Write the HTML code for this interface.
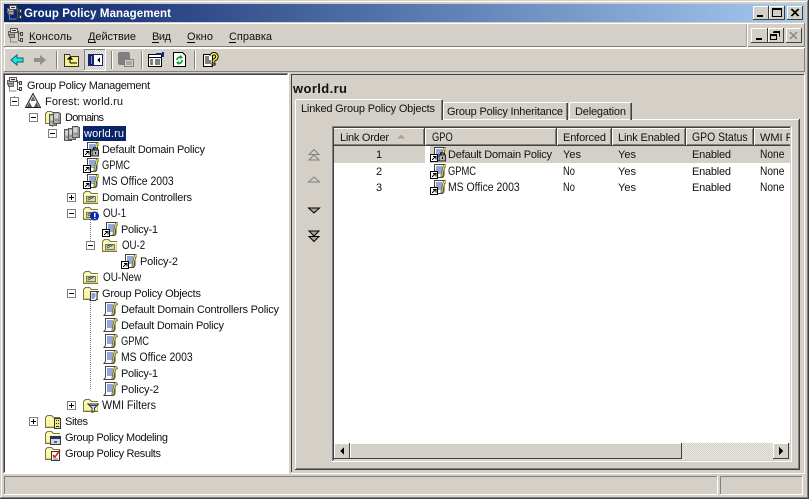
<!DOCTYPE html>
<html><head><meta charset="utf-8"><style>
html,body{margin:0;padding:0;background:#d4d0c8;width:809px;height:499px;overflow:hidden}
svg{display:block}
text{font-family:"Liberation Sans",sans-serif;font-size:11px;fill:#111}
text.c{font-size:12px}
</style></head><body>
<svg width="809" height="499" viewBox="0 0 809 499" xmlns="http://www.w3.org/2000/svg" shape-rendering="crispEdges">
<defs>
<linearGradient id="tg" x1="0" x2="1" y1="0" y2="0"><stop offset="0" stop-color="#0a246a"/><stop offset="1" stop-color="#a6caf0"/></linearGradient>
<pattern id="dith" width="2" height="2" patternUnits="userSpaceOnUse"><rect width="2" height="2" fill="#eae8e3"/><rect width="1" height="1" fill="#d4d0c8"/><rect x="1" y="1" width="1" height="1" fill="#d4d0c8"/></pattern>
<pattern id="dots" width="2" height="2" patternUnits="userSpaceOnUse"><rect width="1" height="1" fill="#808080"/></pattern>
<symbol id="plus" viewBox="0 0 9 9" width="9" height="9"><rect x=".5" y=".5" width="8" height="8" fill="#fff" stroke="#808080"/><path d="M2 4.500h5M4.500 2v5" stroke="#000" fill="none"/></symbol>
<symbol id="minus" viewBox="0 0 9 9" width="9" height="9"><rect x=".5" y=".5" width="8" height="8" fill="#fff" stroke="#808080"/><path d="M2 4.500h5" stroke="#000" fill="none"/></symbol>
<symbol id="gpm" viewBox="0 0 16 16" width="16" height="16"><path d="M1.500 3.500h6v4h-6z" fill="#b8b8b8" stroke="#666"/><path d="M3.500 .5h7v4h-7z" fill="#e4e4e4" stroke="#555"/><path d="M5 2.500h4" stroke="#333"/><path d="M2.500 6.500h5v3h-5z" fill="#a0a0a0" stroke="#666"/><path d="M11.500 3v10M11.500 5.500h2M11.500 12.500h2" stroke="#555" fill="none"/><path d="M13.500 4.500h2v3h-2zM13.500 10.500h2v3h-2z" fill="#ddd" stroke="#444"/><path d="M3.500 10v4h7" stroke="#888" fill="none"/></symbol>
<symbol id="forest" viewBox="0 0 16 16" width="16" height="16"><path d="M8 .5L.5 14.500h15z" fill="#fff" stroke="#222" shape-rendering="auto"/><path d="M8 3L5.500 8h5z" fill="#666" shape-rendering="auto"/><path d="M4.500 9L2 14h5zM11.500 9L9 14h5z" fill="#555" shape-rendering="auto"/></symbol>
<symbol id="folder" viewBox="0 0 16 16" width="16" height="16"><path d="M.5 4.500l2-2h4l2 2h6v10H.5z" fill="#fbf6a6" stroke="#77774a"/><path d="M1 5h14v1H1z" fill="#fffde0"/><path d="M14 6h1v8h-1zM1 13h14v1H1z" fill="#d8c86c"/></symbol>
<symbol id="srv" viewBox="0 0 8 13" width="8" height="13"><path d="M.5 1.500h5l2 1v10h-7z" fill="#b4b4b4" stroke="#555"/><path d="M1.500 4h4M1.500 6h4" stroke="#f4f4f4"/><path d="M1.500 9h4" stroke="#777"/><path d="M6 3v9" stroke="#808080"/></symbol>
<symbol id="domains" viewBox="0 0 16 16" width="16" height="16"><path d="M.5 3.500l2-2h4l2 2h6v10H.5z" fill="#fbf6a6" stroke="#77774a"/><use href="#srv" x="4" y="3"/><use href="#srv" x="8" y="1"/></symbol>
<symbol id="world" viewBox="0 0 16 16" width="16" height="16"><use href="#srv" x="0" y="3"/><use href="#srv" x="4" y="2"/><use href="#srv" x="8" y="0"/></symbol>
<symbol id="scroll" viewBox="0 0 16 16" width="16" height="16"><path d="M3.500 1.500h9.500v10c0 2-1 3-2 3H1.500c1-.5 2-1.500 2-3z" fill="#fff" stroke="#444" shape-rendering="auto"/><path d="M5 4h6M5 6h6M5 8h6M5 10h5" stroke="#2a4fb0"/><path d="M12.500 1.500c2 0 3 1 3 2l-2 1c0 3-2 5-1.500 9l-2 1c-.5-3 1.500-6 1.500-9z" fill="#f8ee30" stroke="#444" stroke-width=".7" shape-rendering="auto"/></symbol>
<symbol id="link" viewBox="0 0 16 16" width="16" height="16"><use href="#scroll" x="1" y="0"/><rect x=".5" y="8.500" width="7" height="7" fill="#fff" stroke="#000"/><path d="M2 14l3-3M3 10.500h3v3" stroke="#000" fill="none"/></symbol>
<symbol id="linklock" viewBox="0 0 16 16" width="16" height="16"><use href="#link"/><rect x="9" y="9" width="6.500" height="6" fill="#b0b0b0" stroke="#222"/><path d="M10.500 9V7h4v2" stroke="#222" fill="none"/><rect x="12" y="11" width="1" height="2" fill="#000"/></symbol>
<symbol id="ou" viewBox="0 0 16 16" width="16" height="16"><use href="#folder"/><path d="M3.500 7.500h9v5h-9z" fill="#d8d8a8" stroke="#777"/><path d="M5 11l3-1.500 3-2" stroke="#2a6a2a" fill="none"/><path d="M4.500 9.500l4-2" stroke="#444"/></symbol>
<symbol id="ouinfo" viewBox="0 0 16 16" width="16" height="16"><use href="#ou"/><circle cx="11.500" cy="11" r="4.500" fill="#0a28b8" shape-rendering="auto"/><path d="M11 8h1.500v4H11zM11 13h1.500v1H11z" fill="#fff"/></symbol>
<symbol id="gpof" viewBox="0 0 16 16" width="16" height="16"><use href="#folder"/><path d="M7.500 6.500h8l-1.500 1v6c0 1-1 2-2 2H6.500c1 0 1-1 1-2z" fill="#fff" stroke="#333"/><path d="M8.500 9h4M8.500 11h4M8.500 13h3" stroke="#1a3fa8"/></symbol>
<symbol id="wmi" viewBox="0 0 16 16" width="16" height="16"><use href="#folder"/><path d="M5 7h10.500l-4 4v3l-2.500 1.500V11z" fill="#e2e2e2" stroke="#333"/><path d="M7 8.500h6" stroke="#1a3fa8"/></symbol>
<symbol id="sites" viewBox="0 0 16 16" width="16" height="16"><use href="#folder"/><rect x="9.500" y="5.500" width="6" height="10" fill="#f2e97c" stroke="#333"/><path d="M11 7h1v1h-1zM13 7h1v1h-1zM11 10h1v1h-1zM13 10h1v1h-1zM11 13h3v1h-3z" fill="#222"/></symbol>
<symbol id="model" viewBox="0 0 16 16" width="16" height="16"><use href="#folder"/><rect x="5.500" y="7.500" width="10" height="8" fill="#d8d4e0" stroke="#333"/><rect x="6" y="8" width="9" height="2" fill="#1a2f9a"/><path d="M9 12h3v2H9z" fill="#666"/></symbol>
<symbol id="result" viewBox="0 0 16 16" width="16" height="16"><use href="#folder"/><rect x="6.500" y="6.500" width="8" height="9" fill="#fff" stroke="#333"/><path d="M8 12h3M8 14h5" stroke="#666"/><path d="M8 10l2 2 5-7" stroke="#d01818" stroke-width="1.500" fill="none" shape-rendering="auto"/></symbol>
</defs>

<!-- window frame -->
<rect width="809" height="499" fill="#d4d0c8"/>
<path d="M1 1.500h806M1.500 1v496" stroke="#fff"/>
<path d="M0 498.500h809M808.500 0v499" stroke="#404040"/>
<path d="M1 497.500h807M807.500 1v497" stroke="#808080"/>

<!-- title bar -->
<rect x="4" y="4" width="801" height="18" fill="url(#tg)"/>
<use href="#gpm" x="6" y="5"/>
<text x="24" y="17" style="font-weight:bold;font-size:11.500px;fill:#fff" textLength="147">Group Policy Management</text>
<rect x="753" y="6" width="16" height="14" fill="#d4d0c8"/><path d="M753.500 20V6.500H769" stroke="#fff" fill="none"/><path d="M753 19.500h15.500V6" stroke="#404040" fill="none"/><rect x="757" y="15" width="6" height="2" fill="#000"/>
<rect x="769" y="6" width="16" height="14" fill="#d4d0c8"/><path d="M769.500 20V6.500H785" stroke="#fff" fill="none"/><path d="M769 19.500h15.500V6" stroke="#404040" fill="none"/><path d="M772.500 8.500h9v8h-9z M772 9.500h10" stroke="#000" fill="none"/>
<rect x="787" y="6" width="16" height="14" fill="#d4d0c8"/><path d="M787.500 20V6.500H803" stroke="#fff" fill="none"/><path d="M787 19.500h15.500V6" stroke="#404040" fill="none"/><path d="M791 9l7 7M792 9l7 7M798 9l-7 7M799 9l-7 7" stroke="#000" shape-rendering="auto"/>

<!-- menu bar -->
<path d="M4 23.500h801M4.500 23v23" stroke="#fff"/><path d="M4 46.500h801M804.500 23v24" stroke="#808080"/>
<path d="M5 47.500h800" stroke="#fff"/>
<path d="M747.500 24v23" stroke="#fff"/><path d="M746.500 24v23" stroke="#a8a49c"/>
<use href="#gpm" x="7" y="28"/>
<text x="29" y="40" textLength="43">Консоль</text><rect x="29" y="42" width="7" height="1"/>
<text x="88" y="40" textLength="48">Действие</text><rect x="88" y="42" width="8" height="1"/>
<text x="152" y="40" textLength="19">Вид</text><rect x="152" y="42" width="7" height="1"/>
<text x="187" y="40" textLength="26">Окно</text><rect x="187" y="42" width="8" height="1"/>
<text x="229" y="40" textLength="43">Справка</text><rect x="229" y="42" width="7" height="1"/>
<rect x="751" y="28" width="17" height="15" fill="#d4d0c8"/><path d="M751.500 43V28.500H768" stroke="#fff" fill="none"/><path d="M751 42.500h16.500V28" stroke="#404040" fill="none"/><rect x="756" y="38" width="6" height="2" fill="#000"/>
<rect x="768" y="28" width="16" height="15" fill="#d4d0c8"/><path d="M768.500 43V28.500H784" stroke="#fff" fill="none"/><path d="M768 42.500h15.500V28" stroke="#404040" fill="none"/><path d="M773.500 31.500h6v5M773 32.500h7M770.500 34.500h6v5h-6zM770 35.500h7" stroke="#000" fill="none"/>
<rect x="786" y="28" width="16" height="15" fill="#d4d0c8"/><path d="M786.500 43V28.500H802" stroke="#fff" fill="none"/><path d="M786 42.500h15.500V28" stroke="#404040" fill="none"/><path d="M790 32l7 7M797 32l-7 7" stroke="#8a8a8a" stroke-width="1.500" shape-rendering="auto"/>

<!-- toolbar -->
<path d="M4 48.500h801M4.500 48v24" stroke="#fff"/><path d="M4 71.500h801M804.500 48v24" stroke="#808080"/>
<path d="M11 60l6-5v3h6v4h-6v3z" fill="#1fe6e6" stroke="#006a6a" shape-rendering="auto"/>
<path d="M46 60l-6-5v3h-6v4h6v3z" fill="#909090" shape-rendering="auto"/>
<path d="M56.500 51v18" stroke="#808080"/><path d="M57.500 51v18" stroke="#fff"/>
<path d="M64.500 54.500h5l1 2h8v10h-14z" fill="#f8f088" stroke="#333"/><path d="M70 63h7M70 63v-4" stroke="#000" fill="none"/><path d="M70 56l-3 3.500h6z" fill="#000"/>
<rect x="84" y="49" width="22" height="22" fill="url(#dith)"/><path d="M84.500 71V49.500H106" stroke="#808080" fill="none"/><path d="M84 70.500h21.500V49" stroke="#fff" fill="none"/>
<rect x="88.500" y="54.500" width="14" height="11" fill="#fff" stroke="#14246e"/><rect x="89" y="55" width="5" height="10" fill="#14246e"/><path d="M91 57h1M91 59h1M91 61h1M91 63h1" stroke="#fff"/><path d="M100 57v6l-3-3z" fill="#000"/><path d="M88 54.500h15" stroke="#14246e"/>
<path d="M111.500 51v18" stroke="#808080"/><path d="M112.500 51v18" stroke="#fff"/>
<rect x="118" y="52" width="12" height="13" rx="2" fill="#808080"/><rect x="124.500" y="59.500" width="9" height="7" fill="#d4d0c8" stroke="#808080"/><path d="M126 62h6M126 64h6" stroke="#808080"/>
<path d="M141.500 51v18" stroke="#808080"/><path d="M142.500 51v18" stroke="#fff"/>
<path d="M148.500 54.500h13v12h-13z" fill="#fff" stroke="#000"/><path d="M148 57.500h14" stroke="#000"/><path d="M150 60h3M155 60h5M150 62h3M155 62h5M150 64h3M155 64h5" stroke="#000"/><path d="M156 53h6v-1l2 0v5h-2v-2h-6z" fill="#10288a"/>
<path d="M173.500 52.500h9l3 3v11h-12z" fill="#fff" stroke="#000"/><path d="M177 60a3 3 0 0 1 4.500-2.500M182 60a3 3 0 0 1-4.500 3" fill="none" stroke="#0f9a2a" stroke-width="1.600" shape-rendering="auto"/><path d="M180 55l3 2.500-3 1.500zM179 65l-3-2.500 3-1.500z" fill="#0f9a2a" shape-rendering="auto"/>
<path d="M194.500 51v18" stroke="#808080"/><path d="M195.500 51v18" stroke="#fff"/>
<path d="M203.500 54.500h9v12h-9z" fill="#fff" stroke="#000"/><path d="M205 57h4M205 59h4M205 61h6M205 63h6" stroke="#000"/>
<path d="M211 56a3 3 0 1 1 4 3.500l-1.500 1v1.500" fill="none" stroke="#000" stroke-width="3.400" shape-rendering="auto"/><path d="M211 56a3 3 0 1 1 4 3.500l-1.500 1v1.500" fill="none" stroke="#f8ec20" stroke-width="1.600" shape-rendering="auto"/><rect x="212" y="63" width="3" height="2" fill="#f8ec20" stroke="#000" stroke-width=".6"/>

<!-- left pane -->
<path d="M4 74.500h283M4.500 74v398" stroke="#404040"/>
<path d="M3 73.500h285M3.500 73v400" stroke="#808080"/>
<path d="M3 473.500h285M288.500 73v401" stroke="#fff"/>
<rect x="5" y="75" width="283" height="398" fill="#fff"/>

<!-- tree dotted lines -->
<g fill="url(#dots)">
<rect x="14" y="95" width="1" height="6"/><rect x="19" y="101" width="7" height="1"/>
<rect x="33" y="107" width="1" height="346"/><rect x="38" y="117" width="6" height="1"/>
<rect x="52" y="122" width="1" height="6"/><rect x="57" y="133" width="6" height="1"/>
<rect x="38" y="421" width="6" height="1"/><rect x="33" y="437" width="12" height="1"/><rect x="33" y="453" width="12" height="1"/>
<rect x="71" y="139" width="1" height="154"/>
<rect x="71" y="149" width="12" height="1"/><rect x="71" y="165" width="12" height="1"/><rect x="71" y="181" width="12" height="1"/>
<rect x="76" y="197" width="6" height="1"/><rect x="76" y="213" width="6" height="1"/><rect x="71" y="277" width="12" height="1"/><rect x="76" y="293" width="6" height="1"/>
<rect x="90" y="219" width="1" height="26"/><rect x="90" y="229" width="12" height="1"/><rect x="95" y="245" width="6" height="1"/>
<rect x="109" y="251" width="1" height="10"/><rect x="109" y="261" width="12" height="1"/>
<rect x="90" y="299" width="1" height="90"/>
<rect x="90" y="309" width="12" height="1"/><rect x="90" y="325" width="12" height="1"/><rect x="90" y="341" width="12" height="1"/><rect x="90" y="357" width="12" height="1"/><rect x="90" y="373" width="12" height="1"/><rect x="90" y="389" width="12" height="1"/>
<rect x="76" y="405" width="6" height="1"/>
<rect x="71" y="293" width="1" height="112"/>
</g>
<use href="#minus" x="10" y="97"/><use href="#minus" x="29" y="113"/><use href="#minus" x="48" y="129"/>
<use href="#plus" x="67" y="193"/><use href="#minus" x="67" y="209"/><use href="#minus" x="86" y="241"/><use href="#minus" x="67" y="289"/><use href="#plus" x="67" y="401"/><use href="#plus" x="29" y="417"/>

<use href="#gpm" x="6" y="77"/>
<use href="#forest" x="25" y="93"/>
<use href="#domains" x="45" y="110"/>
<use href="#world" x="64" y="125"/>
<use href="#linklock" x="83" y="141"/>
<use href="#link" x="83" y="157"/>
<use href="#link" x="83" y="173"/>
<use href="#ou" x="83" y="189"/>
<use href="#ouinfo" x="83" y="205"/>
<use href="#link" x="102" y="221"/>
<use href="#ou" x="102" y="237"/>
<use href="#link" x="121" y="253"/>
<use href="#ou" x="83" y="269"/>
<use href="#gpof" x="83" y="285"/>
<use href="#scroll" x="102" y="301"/><use href="#scroll" x="102" y="317"/><use href="#scroll" x="102" y="333"/><use href="#scroll" x="102" y="349"/><use href="#scroll" x="102" y="365"/><use href="#scroll" x="102" y="381"/>
<use href="#wmi" x="83" y="397"/>
<use href="#sites" x="45" y="413"/>
<use href="#model" x="45" y="429"/>
<use href="#result" x="45" y="445"/>

<g>
<text x="27" y="89" textLength="123">Group Policy Management</text>
<text x="45" y="105" textLength="78">Forest: world.ru</text>
<text x="65" y="121" textLength="39">Domains</text>
<rect x="83" y="126" width="43" height="15" fill="#0a246a"/>
<text x="84" y="137" textLength="40" style="fill:#fff">world.ru</text>
<text x="102" y="153" textLength="103">Default Domain Policy</text>
<text class="c" transform="translate(102 169) scale(.78 1)">GPMC</text>
<text class="c" transform="translate(102 185) scale(.87 1)">MS Office 2003</text>
<text x="102" y="201" textLength="90">Domain Controllers</text>
<text class="c" transform="translate(103 217) scale(.81 1)">OU-1</text>
<text x="121" y="233" textLength="37">Policy-1</text>
<text class="c" transform="translate(122 249) scale(.81 1)">OU-2</text>
<text x="140" y="265" textLength="38">Policy-2</text>
<text class="c" transform="translate(103 281) scale(.83 1)">OU-New</text>
<text x="102" y="297" textLength="99">Group Policy Objects</text>
<text x="121" y="313" textLength="158">Default Domain Controllers Policy</text>
<text x="121" y="329" textLength="103">Default Domain Policy</text>
<text class="c" transform="translate(121 345) scale(.78 1)">GPMC</text>
<text class="c" transform="translate(121 361) scale(.87 1)">MS Office 2003</text>
<text x="121" y="377" textLength="37">Policy-1</text>
<text x="121" y="393" textLength="38">Policy-2</text>
<text class="c" transform="translate(102 409) scale(.89 1)">WMI Filters</text>
<text x="65" y="425" textLength="23">Sites</text>
<text x="65" y="441" textLength="103">Group Policy Modeling</text>
<text x="65" y="457" textLength="96">Group Policy Results</text>
</g>

<!-- right pane -->
<path d="M291 74.500h514M291.500 74v398" stroke="#404040"/>
<path d="M291 473.500h514M804.500 74v400" stroke="#fff"/>
<text x="293" y="93" style="font-weight:bold;font-size:13px" textLength="54">world.ru</text>

<!-- tab panel -->
<path d="M295.500 470V119.500H800" stroke="#fff" fill="none"/>
<path d="M295 469.500h504.500V119" stroke="#404040" fill="none"/>
<path d="M296 468.500h502.500V120" stroke="#808080" fill="none"/>

<!-- tabs -->
<path d="M443.500 120V103.500l1-1h123" stroke="#fff" fill="none"/><path d="M567.500 103v17" stroke="#404040"/><path d="M566.500 103v17" stroke="#808080"/>
<path d="M569.500 120V103.500l1-1h60" stroke="#fff" fill="none"/><path d="M631.500 103v17" stroke="#404040"/><path d="M630.500 103v17" stroke="#808080"/>
<rect x="296" y="100" width="146" height="21" fill="#d4d0c8"/>
<path d="M295.500 120V100.500l1-1h145" stroke="#fff" fill="none"/><path d="M442.500 100v20" stroke="#404040"/><path d="M441.500 100v20" stroke="#808080"/>
<text x="301" y="112" textLength="134">Linked Group Policy Objects</text>
<text x="447" y="115" textLength="116">Group Policy Inheritance</text>
<text x="575" y="115" textLength="51">Delegation</text>

<!-- order arrows -->
<g fill="#d4d0c8" stroke="#808080" shape-rendering="auto">
<path d="M314 149.500l5 5h-10zM314 155l5 5h-10z"/>
<path d="M314 177l5.500 5h-11z"/>
</g>
<g fill="#a8a49c" stroke="#000" shape-rendering="auto">
<path d="M314 213l-5.500-5h11z"/>
<path d="M314 236l-5-5h10zM314 241.500l-5-5h10z"/>
</g>

<!-- list view -->
<rect x="332" y="126" width="459" height="336" fill="#fff"/>
<path d="M332.500 461V126.500H791" stroke="#808080" fill="none"/>
<path d="M333.500 460V127.500H790" stroke="#404040" fill="none"/>
<path d="M332 461.500h459.500V126" stroke="#fff" fill="none"/>
<path d="M333 460.500h457.500V127" stroke="#d4d0c8" fill="none"/>

<!-- header -->
<rect x="334" y="128" width="456" height="18" fill="#d4d0c8"/>
<path d="M334 128.500h456" stroke="#fff"/>
<path d="M334 145.500h456" stroke="#404040"/><path d="M334 144.500h456" stroke="#808080"/>
<path d="M424.500 128v18" stroke="#404040"/><path d="M423.500 129v16" stroke="#808080"/><path d="M425.500 129v16" stroke="#fff"/>
<path d="M556.500 128v18" stroke="#404040"/><path d="M555.500 129v16" stroke="#808080"/><path d="M557.500 129v16" stroke="#fff"/>
<path d="M611.500 128v18" stroke="#404040"/><path d="M610.500 129v16" stroke="#808080"/><path d="M612.500 129v16" stroke="#fff"/>
<path d="M685.500 128v18" stroke="#404040"/><path d="M684.500 129v16" stroke="#808080"/><path d="M686.500 129v16" stroke="#fff"/>
<path d="M753.500 128v18" stroke="#404040"/><path d="M752.500 129v16" stroke="#808080"/><path d="M754.500 129v16" stroke="#fff"/>
<text x="340" y="141" textLength="49">Link Order</text>
<path d="M397 138.500l4-4 4 4z" fill="#a8a49c"/>
<text class="c" transform="translate(432 141) scale(.78 1)">GPO</text>
<text x="563" y="141" textLength="43">Enforced</text>
<text x="618" y="141" textLength="62">Link Enabled</text>
<text class="c" transform="translate(692 141) scale(.87 1)">GPO Status</text>
<clipPath id="cw"><rect x="755" y="128" width="35" height="80"/></clipPath>
<text x="760" y="141" clip-path="url(#cw)">WMI Filter</text>

<!-- rows -->
<rect x="334" y="146" width="456" height="17" fill="#d4d0c8"/>
<rect x="425" y="146" width="5" height="17" fill="#fff"/>
<use href="#linklock" x="430" y="146"/><use href="#link" x="430" y="163"/><use href="#link" x="430" y="179"/>
<text x="376" y="158">1</text><text x="448" y="158" textLength="104">Default Domain Policy</text><text x="563" y="158" textLength="18">Yes</text><text x="618" y="158" textLength="18">Yes</text><text x="692" y="158" textLength="39">Enabled</text><text class="c" transform="translate(760 158) scale(.85 1)">None</text>
<text x="376" y="175">2</text><text class="c" transform="translate(448 175) scale(.78 1)">GPMC</text><text class="c" transform="translate(563 175) scale(.78 1)">No</text><text x="618" y="175" textLength="18">Yes</text><text x="692" y="175" textLength="39">Enabled</text><text class="c" transform="translate(760 175) scale(.85 1)">None</text>
<text x="376" y="191">3</text><text class="c" transform="translate(448 191) scale(.87 1)">MS Office 2003</text><text class="c" transform="translate(563 191) scale(.78 1)">No</text><text x="618" y="191" textLength="18">Yes</text><text x="692" y="191" textLength="39">Enabled</text><text class="c" transform="translate(760 191) scale(.85 1)">None</text>

<!-- scrollbar -->
<rect x="334" y="443" width="456" height="17" fill="url(#dith)"/>
<rect x="334" y="443" width="16" height="16" fill="#d4d0c8"/><path d="M334.500 459V443.500H350" stroke="#fff" fill="none"/><path d="M334 458.500h15.500V443" stroke="#404040" fill="none"/><path d="M340 451l4-4v8z" fill="#000"/>
<rect x="350" y="443" width="332" height="16" fill="#d4d0c8"/><path d="M350.500 459V443.500H682" stroke="#fff" fill="none"/><path d="M350 458.500h331.500V443" stroke="#404040" fill="none"/>
<rect x="773" y="443" width="16" height="16" fill="#d4d0c8"/><path d="M773.500 459V443.500H789" stroke="#fff" fill="none"/><path d="M773 458.500h15.500V443" stroke="#404040" fill="none"/><path d="M783 451l-4-4v8z" fill="#000"/>

<!-- status bar -->
<path d="M4 476.500h714M4.500 476v19" stroke="#808080"/><path d="M4 494.500h714M717.500 476v19" stroke="#fff"/>
<path d="M720 476.500h83M720.500 476v19" stroke="#808080"/><path d="M720 494.500h83M802.500 476v19" stroke="#fff"/>
</svg>
</body></html>
